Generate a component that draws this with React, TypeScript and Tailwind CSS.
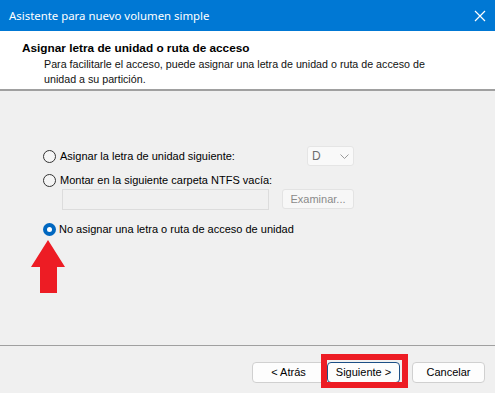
import React from "react";

const font = { fontFamily: '"Liberation Sans", Arial, sans-serif' };

function Radio({ checked }: { checked?: boolean }) {
  if (checked) {
    return (
      <span className="w-[13px] h-[13px] rounded-full bg-[#0067c0] flex items-center justify-center shrink-0">
        <span className="w-[5px] h-[5px] rounded-full bg-white" />
      </span>
    );
  }
  return <span className="w-[13px] h-[13px] rounded-full border border-[#333] bg-[#f5f5f5] shrink-0" />;
}

export default function App() {
  return (
    <div className="w-[495px] h-[393px] flex flex-col bg-[#f0f0f0] relative overflow-hidden text-[#000]" style={font}>
      <div className="h-[31px] bg-[#0078d4] flex items-center justify-between pl-[9px] pr-[7px] shrink-0">
        <span className="text-white text-[11.4px]" style={{ fontFamily: '"Noto Sans", "Open Sans", sans-serif' }}>Asistente para nuevo volumen simple</span>
        <svg width="12" height="12" viewBox="0 0 12 12" className="mr-[2px]">
          <path d="M1 1 L11 11 M11 1 L1 11" stroke="white" strokeWidth="1.2" />
        </svg>
      </div>
      <div className="h-[60px] bg-white border-b-[2px] border-[#a0a0a0] shrink-0 pl-[22px] pt-[10px]">
        <div className="text-[11.8px] font-bold leading-[14px]">Asignar letra de unidad o ruta de acceso</div>
        <div className="pl-[22px] text-[10.7px] leading-[15px] mt-[2px] text-[#111]">
          Para facilitarle el acceso, puede asignar una letra de unidad o ruta de acceso de<br />unidad a su partición.
        </div>
      </div>
      <div className="h-[255px] shrink-0 border-b border-[#a0a0a0] pl-[43px] pt-[55px] text-[11px]">
        <div className="w-[311px] h-[20px] flex items-center justify-between">
          <div className="flex items-center gap-[4px]">
            <Radio />
            <span>Asignar la letra de unidad siguiente:</span>
          </div>
          <div className="w-[47px] h-[20px] bg-[#f9f9f9] border border-[#e5e5e5] rounded-[3px] flex items-center justify-between px-[4px] text-[#6d6d6d]">
            <span className="text-[12px]">D</span>
            <svg width="9" height="5" viewBox="0 0 9 5"><path d="M0.5 0.5 L4.5 4.5 L8.5 0.5" stroke="#9a9a9a" fill="none" /></svg>
          </div>
        </div>
        <div className="h-[20px] mt-[4px] flex items-center gap-[4px]">
          <Radio />
          <span>Montar en la siguiente carpeta NTFS vacía:</span>
        </div>
        <div className="w-[311px] mt-[-1px] flex items-start justify-between pl-[19px]">
          <div className="w-[207px] h-[21px] border border-[#dcdcdc] bg-[#f0f0f0]" />
          <div className="w-[72px] h-[20px] border border-[#e3e3e3] bg-[#f7f7f7] rounded-[3px] flex items-center justify-center text-[#8a8a8a]">Examinar...</div>
        </div>
        <div className="h-[20px] mt-[9px] flex items-center gap-[3px]">
          <Radio checked />
          <span>No asignar una letra o ruta de acceso de unidad</span>
        </div>
      </div>
      <div className="flex-1 flex items-start justify-end pr-[10px] pt-[16px] text-[11px]">
        <div className="w-[73px] h-[21px] bg-[#fdfdfd] border border-[#d0d0d0] rounded-[4px] flex items-center justify-center">&lt; Atrás</div>
        <div className="w-[73px] h-[21px] ml-[2px] bg-[#fdfdfd] border border-[#1c4f86] rounded-[4px] flex items-center justify-center">Siguiente &gt;</div>
        <div className="w-[73px] h-[21px] ml-[12px] bg-[#fdfdfd] border border-[#d0d0d0] rounded-[4px] flex items-center justify-center">Cancelar</div>
      </div>
      {/* red highlight box */}
      <div className="absolute left-[321px] top-[354px] w-[87px] h-[34px] border-[6px] border-[#ed1c24]" />
      {/* red arrow */}
      <svg className="absolute left-[31px] top-[240px]" width="34" height="54" viewBox="0 0 34 54">
        <path d="M17 0 L34 27 L26 27 L26 53 L9 53 L9 27 L0 27 Z" fill="#ed1c24" />
      </svg>
    </div>
  );
}
